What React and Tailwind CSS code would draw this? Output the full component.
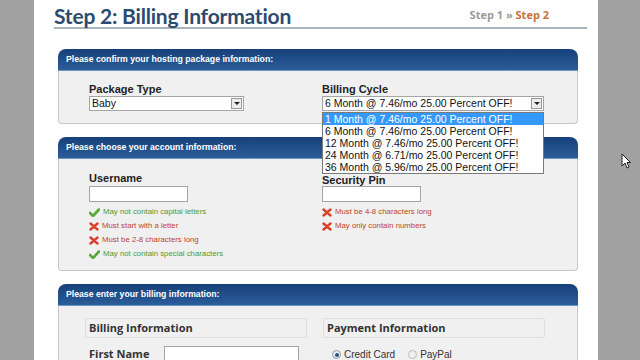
import React from 'react';

const sans = { fontFamily: '"Liberation Sans", Arial, sans-serif' };

const Check = () => (
    <svg width="11" height="9" viewBox="0 0 11 9" className="shrink-0">
        <path d="M1 5 L4 8 L10 1.5" fill="none" stroke="#5aa83a" strokeWidth="2.6" strokeLinecap="round" strokeLinejoin="round" />
    </svg>
);

const Cross = () => (
    <svg width="10" height="9" viewBox="0 0 10 9" className="shrink-0">
        <path d="M1.5 1.5 L8.5 7.5 M8.5 1.5 L1.5 7.5" fill="none" stroke="#d8412a" strokeWidth="2.4" strokeLinecap="round" />
    </svg>
);

const Rule = ({ ok, children }) => (
    <div className="flex items-center gap-[3px] h-[14px]">
        {ok ? <Check /> : <Cross />}
        <span className={`text-[7.8px] ${ok ? 'text-[#4f9a33]' : 'text-[#c0432f]'}`}>{children}</span>
    </div>
);

const Panel = ({ title, children, bodyClass }) => (
    <div className="ml-[24px] mr-[20px]">
        <div className="h-[22px] rounded-t-[8px] bg-gradient-to-b from-[#17407a] to-[#2b5d99] border-b border-[#6f95c2] flex items-center pl-[8px]">
            <span className="text-white font-bold text-[8.7px]">{title}</span>
        </div>
        <div className={`bg-[#f0f0f0] border border-t-0 border-[#c8c8c8] rounded-b-[4px] ${bodyClass}`}>{children}</div>
    </div>
);

const Select = ({ value, w }) => (
    <div className={`${w} h-[15px] bg-white border border-[#a5a5a5] flex items-center justify-between pl-[2px] pr-[1px]`}>
        <span className="text-[10.5px] text-[#111] leading-none">{value}</span>
        <span className="w-[11px] h-[11px] border border-[#9a9a9a] bg-[#ececec] flex items-center justify-center">
            <span className="border-x-[3px] border-x-transparent border-t-[3px] border-t-[#222]" />
        </span>
    </div>
);

const options = [
    '1 Month @ 7.46/mo 25.00 Percent OFF!',
    '6 Month @ 7.46/mo 25.00 Percent OFF!',
    '12 Month @ 7.46/mo 25.00 Percent OFF!',
    '24 Month @ 6.71/mo 25.00 Percent OFF!',
    '36 Month @ 5.96/mo 25.00 Percent OFF!',
];

const heading = { fontFamily: '"Open Sans", sans-serif' };

export default function App() {
    return (
        <div className="w-[640px] h-[360px] overflow-hidden bg-[#a1a1a1] flex relative" style={sans}>
            <div className="w-[34px] shrink-0" />
            <div className="w-[564px] shrink-0 bg-white pt-[7px]">
                {/* title */}
                <div className="ml-[20px] mr-[11px] flex items-end justify-between border-b-2 border-[#a9b3bc] h-[22px] pr-[38px]">
                    <h1 className="text-[21px] font-bold text-[#2b4b70] leading-none pb-[1px] tracking-[-0.2px]" style={{ fontFamily: 'Lato, sans-serif' }}>
                        Step 2: Billing Information
                    </h1>
                    <div className="text-[11px] font-bold pb-[4px]" style={heading}>
                        <span className="text-[#9b9b9b]">Step 1 » </span>
                        <span className="text-[#c87238]">Step 2</span>
                    </div>
                </div>

                <div className="mt-[20px] flex flex-col gap-[13px]">
                    <Panel title="Please confirm your hosting package information:" bodyClass="h-[53px] pl-[30px] pt-[12px]">
                        <div className="grid grid-cols-[233px_1fr]">
                            <div>
                                <div className="text-[11px] font-bold text-[#222] h-[13px] leading-[13px]">Package Type</div>
                                <Select value="Baby" w="w-[155px]" />
                            </div>
                            <div className="relative">
                                <div className="text-[11px] font-bold text-[#222] h-[13px] leading-[13px]">Billing Cycle</div>
                                <Select value="6 Month @ 7.46/mo 25.00 Percent OFF!" w="w-[222px]" />
                                <div className="absolute left-0 top-[29px] w-[222px] bg-white border border-[#7a7a7a] z-10">
                                    {options.map((o, i) => (
                                        <div key={i} className={`h-[12px] leading-[12px] text-[10.5px] pl-[2px] ${i === 0 ? 'bg-[#3399ff] text-white' : 'text-[#111]'}`}>
                                            {o}
                                        </div>
                                    ))}
                                </div>
                            </div>
                        </div>
                    </Panel>

                    <Panel title="Please choose your account information:" bodyClass="h-[112px] pl-[30px] pt-[12px]">
                        <div className="grid grid-cols-[233px_1fr]">
                            <div>
                                <div className="text-[11px] font-bold text-[#222] h-[14px] leading-[14px]">Username</div>
                                <div className="w-[99px] h-[16px] bg-white border border-[#a5a5a5] mt-[1px]" />
                                <div className="mt-[3px]">
                                    <Rule ok>May not contain capital letters</Rule>
                                    <Rule>Must start with a letter</Rule>
                                    <Rule>Must be 2-8 characters long</Rule>
                                    <Rule ok>May not contain special characters</Rule>
                                </div>
                            </div>
                            <div>
                                <div className="text-[11px] font-bold text-[#222] h-[14px] leading-[14px] pt-[2px]">Security Pin</div>
                                <div className="w-[99px] h-[16px] bg-white border border-[#a5a5a5] mt-[1px]" />
                                <div className="mt-[3px]">
                                    <Rule>Must be 4-8 characters long</Rule>
                                    <Rule>May only contain numbers</Rule>
                                </div>
                            </div>
                        </div>
                    </Panel>

                    <Panel title="Please enter your billing information:" bodyClass="h-[80px] pl-[26px] pt-[12px]">
                        <div className="grid grid-cols-[238px_1fr]">
                            <div>
                                <div className="w-[222px] h-[20px] border border-[#dedede] rounded-[2px] flex items-center pl-[3px] text-[11px] font-bold text-[#333]" style={heading}>
                                    Billing Information
                                </div>
                                <div className="flex items-center mt-[8px] pl-[4px]">
                                    <span className="w-[75px] text-[11px] font-bold text-[#333]" style={heading}>First Name</span>
                                    <div className="w-[135px] h-[17px] bg-white border border-[#a5a5a5]" />
                                </div>
                            </div>
                            <div>
                                <div className="w-[222px] h-[20px] border border-[#dedede] rounded-[2px] flex items-center pl-[3px] text-[11px] font-bold text-[#333]" style={heading}>
                                    Payment Information
                                </div>
                                <div className="flex items-center mt-[9px] pl-[9px] text-[10px] text-[#333]">
                                    <span className="w-[9px] h-[9px] rounded-full border border-[#8a9bb0] bg-[#e8eef5] flex items-center justify-center">
                                        <span className="w-[4px] h-[4px] rounded-full bg-[#2d4f7a]" />
                                    </span>
                                    <span className="ml-[3px]">Credit Card</span>
                                    <span className="ml-[13px] w-[9px] h-[9px] rounded-full border border-[#bbbbbb] bg-[#eeeeee]" />
                                    <span className="ml-[3px]">PayPal</span>
                                </div>
                            </div>
                        </div>
                    </Panel>
                </div>
            </div>
            <div className="flex-1" />
            <svg className="absolute left-[621px] top-[153px]" width="10" height="16" viewBox="0 0 10 16">
                <path d="M1 1 L1 13 L4 10 L6 15 L8 14 L6 9.5 L9.5 9.5 Z" fill="#fff" stroke="#222" strokeWidth="1" strokeLinejoin="round" />
            </svg>
        </div>
    );
}
